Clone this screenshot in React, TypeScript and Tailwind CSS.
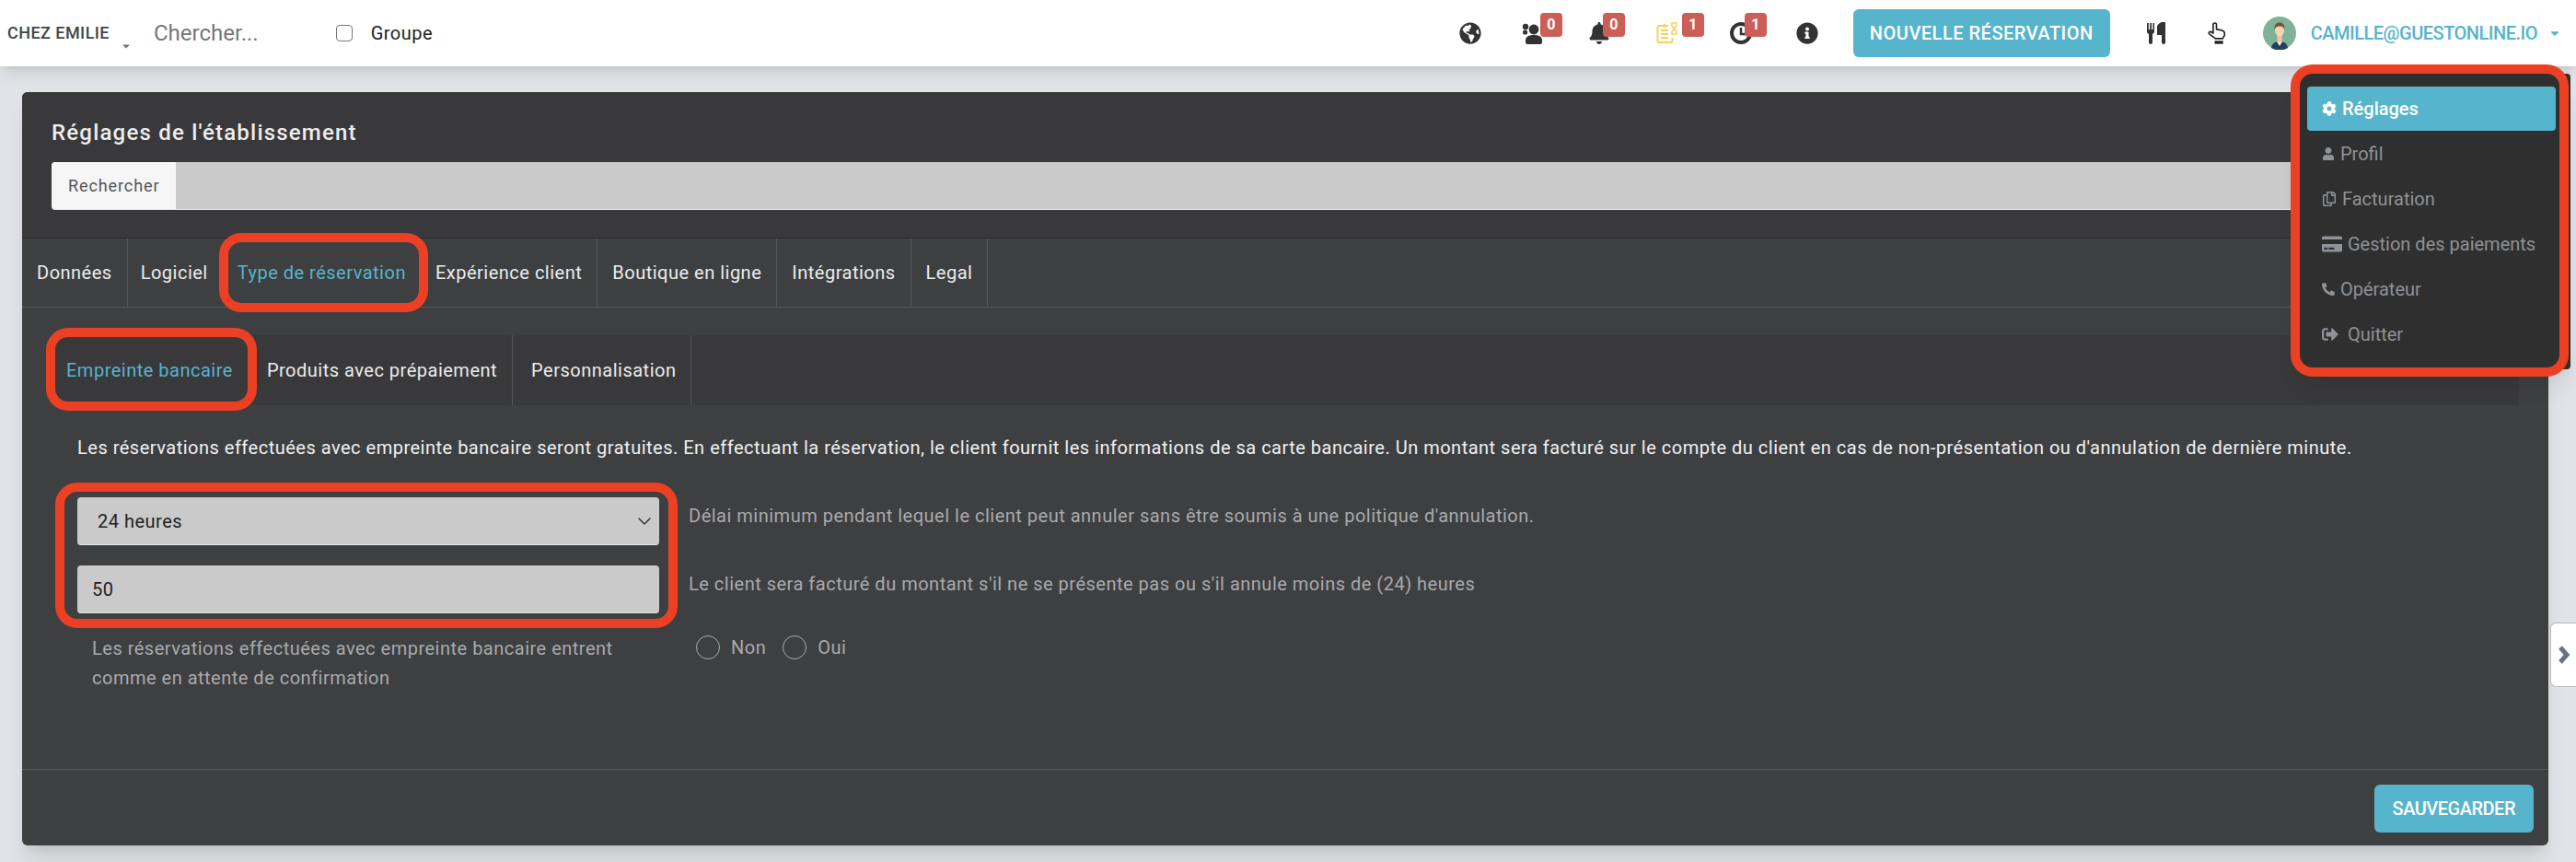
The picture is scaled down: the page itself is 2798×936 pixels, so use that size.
import React from 'react';
import { FaGlobeAmericas, FaBell, FaInfoCircle, FaCog, FaUser, FaRegCopy, FaCreditCard, FaPhoneAlt, FaSignOutAlt, FaCaretDown } from 'react-icons/fa';
import { ChevronDown } from 'lucide-react';

const RedBox: React.FC<{ className: string }> = ({ className }) => (
  <span className={`absolute border-10 border-[#eb4024] rounded-3xl pointer-events-none ${className}`} />
);

const Badge: React.FC<{ value: number; className: string }> = ({ value, className }) => (
  <span className={`absolute -top-2.5 w-6 h-6.5 rounded-sm bg-[#cb5f58] text-white text-base font-bold flex items-center justify-center ${className}`}>{value}</span>
);

const GroupIcon = () => (
  <svg viewBox="0 0 24 24" className="w-6 h-6 text-[#333333]" fill="currentColor">
    <circle cx="4" cy="5" r="3.2" />
    <circle cx="3.6" cy="11" r="2.6" />
    <circle cx="13" cy="8" r="5.4" />
    <path d="M4 20c0-4 3-6 9-6s9 2 9 6v2c0 1-1 2-2 2H6c-1 0-2-1-2-2z" />
  </svg>
);

const TasksIcon = () => (
  <svg viewBox="0 0 24 24" className="w-6 h-6 text-[#f7d35c]" fill="none" stroke="currentColor" strokeWidth="2">
    <path d="M13 4H3a1.500 1.500 0 0 0-1.500 1.500v15A1.500 1.500 0 0 0 3 22h13a1.500 1.500 0 0 0 1.500-1.500V17" />
    <path d="M5 9h8M5 13h8M5 17h8" />
    <path d="M9 2v4" />
    <path d="M17 1h5v3l-2.500 3L22 10v3h-5v-3l2.500-3L17 4z" strokeWidth="1.600" />
  </svg>
);

const ClockIcon = () => (
  <svg viewBox="0 0 24 24" className="w-6 h-6 text-[#333333]" fill="none" stroke="currentColor">
    <circle cx="12" cy="12" r="10" strokeWidth="4" />
    <path d="M12 6v7h5" strokeWidth="2.500" />
  </svg>
);

const CutleryIcon = () => (
  <svg viewBox="0 0 20 24" className="w-5 h-6 text-[#333333]" fill="currentColor">
    <path d="M0 1h1.800v7h1.400V1H5v7h1.400V1H8v9c0 1.500-1 2.500-2 3v9c0 1-.7 2-2 2s-2-1-2-2v-9c-1-.5-2-1.500-2-3z" />
    <path d="M11 14V5c0-2 2-4 5-5h4v22c0 1-.8 2-2 2s-2-1-2-2v-8z" />
  </svg>
);

const HandIcon = () => (
  <svg viewBox="0 0 24 30" className="w-5 h-6.5 text-[#222222]" fill="none" stroke="currentColor" strokeWidth="2" strokeLinejoin="round">
    <path d="M7 4a2.200 2.200 0 0 1 4.400 0v6l5.600 1c3 .6 5 2 5 4.500v2L19.500 22H10L2 16c-1.500-1.500.5-3.800 2.800-2.500L7 15z" />
    <rect x="9" y="25" width="11" height="4" fill="currentColor" stroke="none" />
  </svg>
);

const Avatar = () => (
  <svg viewBox="0 0 36 36" className="w-9 h-9 shrink-0">
    <circle cx="18" cy="18" r="18" fill="#7fb29b" />
    <path d="M9 34c1-5 4-7 9-7s8 2 9 7a18 18 0 0 1-18 0z" fill="#24405f" />
    <path d="M15 27l3 5 3-5z" fill="#ffffff" />
    <rect x="15.500" y="20" width="5" height="8" fill="#eec9a3" />
    <ellipse cx="18" cy="15" rx="5" ry="6.500" fill="#f5d6b4" />
    <path d="M12.500 15c-.5-6 2-8.500 5.500-8.500s6 2.500 5.500 8.500c-.5-3-2-4.500-5.500-4.500s-5 1.500-5.500 4.500z" fill="#7a4f38" />
  </svg>
);

const Tab: React.FC<{ label: string; active?: boolean; divider?: boolean; className?: string; children?: React.ReactNode }> = ({ label, active, divider = true, className = 'px-4', children }) => (
  <div className={`relative h-full flex items-center text-xl tracking-wide ${className} ${divider ? 'border-r border-[#55565a]' : ''} ${active ? 'text-[#56b4cc]' : 'text-[#ececec]'}`}>
    {label}
    {children}
  </div>
);

const MenuItem: React.FC<{ icon: React.ReactNode; label: string; active?: boolean; gap?: string }> = ({ icon, label, active, gap = 'gap-1.5' }) => (
  <div className={`h-12 flex items-center px-4 rounded-sm text-xl ${gap} ${active ? 'bg-[#56b4cc] text-white font-medium' : 'text-[#8f9296]'}`}>
    {icon}
    <span>{label}</span>
  </div>
);

export default function App() {
  return (
    <div className="relative h-screen overflow-hidden flex flex-col bg-[#e1e3e8] font-[Roboto,sans-serif]">
      <header className="h-18 shrink-0 flex items-center bg-white shadow-lg z-10 pl-2 pr-4">
        <span className="text-lg font-medium uppercase tracking-wide text-[#444444]">Chez Emilie</span>
        <FaCaretDown className="w-3 h-3 ml-3 mt-7 text-[#777777]" />
        <span className="ml-6 text-2xl text-[#777777]">Chercher...</span>
        <input type="checkbox" readOnly className="ml-21 w-4.5 h-4.5 appearance-none rounded-sm border border-[#777777]" />
        <span className="ml-5 text-xl tracking-wide text-[#222222]">Groupe</span>

        <div className="ml-auto flex items-center">
          <FaGlobeAmericas className="w-6 h-6 text-[#333333]" />
          <div className="relative ml-11 w-6 h-6"><GroupIcon /><Badge value={0} className="left-5" /></div>
          <div className="relative ml-12 w-6 h-6"><FaBell className="w-6 h-6 text-[#333333]" /><Badge value={0} className="left-4" /></div>
          <div className="relative ml-12.5 w-6 h-6"><TasksIcon /><Badge value={1} className="left-7" /></div>
          <div className="relative ml-14 w-6 h-6"><ClockIcon /><Badge value={1} className="left-4" /></div>
          <FaInfoCircle className="ml-12 w-6 h-6 text-[#333333]" />
          <button className="ml-9.5 h-13 px-4.5 rounded-md bg-[#56b4cc] text-white text-xl font-medium uppercase tracking-wide">Nouvelle réservation</button>
          <div className="ml-10"><CutleryIcon /></div>
          <div className="ml-11.5"><HandIcon /></div>
          <div className="ml-10"><Avatar /></div>
          <span className="ml-4 text-xl font-medium uppercase tracking-tight text-[#56b4cc]">Camille@guestonline.io</span>
          <FaCaretDown className="ml-3 w-3.5 h-3.5 text-[#56b4cc]" />
        </div>
      </header>

      <main className="flex-1 min-h-0 flex flex-col ml-6 mr-7.5 mt-7 mb-4.5 rounded-md bg-[#3e3f41] shadow-xl">
        <div className="bg-[#39393b] rounded-t-md pt-7 pb-7.5 px-8">
          <h1 className="text-2xl font-medium tracking-wider text-[#ededed] leading-8">Réglages de l'établissement</h1>
          <div className="mt-4 h-13 flex rounded-sm bg-[#cacaca] border-b border-[#e6e6e6]">
            <div className="flex items-center px-4.5 bg-[#f6f6f6] rounded-l-sm text-lg tracking-wider text-[#555555]">Rechercher</div>
          </div>
        </div>

        <nav className="h-19 shrink-0 flex border-t border-b border-t-[#2c2d2f] border-b-[#55565a]">
          <Tab label="Données" />
          <Tab label="Logiciel" divider={false} className="pl-3.5 pr-4" />
          <Tab label="Type de réservation" active divider={false}>
            <RedBox className="-left-1 -right-2 -top-1.5 -bottom-1.5" />
          </Tab>
          <Tab label="Expérience client" />
          <Tab label="Boutique en ligne" />
          <Tab label="Intégrations" />
          <Tab label="Legal" />
        </nav>

        <div className="mt-7.5 mx-8 h-19 shrink-0 flex bg-[#39393b]">
          <Tab label="Empreinte bancaire" active className="px-4">
            <RedBox className="-left-1.5 -right-2.5 -top-2 -bottom-1.5" />
          </Tab>
          <Tab label="Produits avec prépaiement" className="pl-5 pr-4" />
          <Tab label="Personnalisation" className="pl-5 pr-4" />
        </div>

        <div className="flex-1 px-15">
          <p className="mt-8 text-xl tracking-wide text-[#f0f0f0] leading-7">
            Les réservations effectuées avec empreinte bancaire seront gratuites. En effectuant la réservation, le client fournit les informations de sa carte bancaire. Un montant sera facturé sur le compte du client en cas de non-présentation ou d'annulation de dernière minute.
          </p>

          <div className="mt-10 flex">
            <div className="relative w-158 flex flex-col gap-5.5">
              <div className="relative h-13 flex items-center px-5.5 rounded-sm bg-[#cacaca] border-b border-[#e6e6e6] text-xl tracking-wide text-[#222222]">
                24 heures
                <ChevronDown className="absolute right-1 w-6 h-6 text-[#333333]" strokeWidth={1.5} />
              </div>
              <div className="h-13 flex items-center px-4 rounded-sm bg-[#cacaca] border-b border-[#e6e6e6] text-xl tracking-wide text-[#222222]">50</div>
              <RedBox className="-left-6 -right-5 -top-4 -bottom-4" />
            </div>
            <div className="ml-8 flex flex-col gap-5.5 text-xl tracking-wide text-[#a9aaac]">
              <div className="h-13 pt-1.5">Délai minimum pendant lequel le client peut annuler sans être soumis à une politique d'annulation.</div>
              <div className="h-13 pt-1.5">Le client sera facturé du montant s'il ne se présente pas ou s'il annule moins de (24) heures</div>
            </div>
          </div>

          <div className="mt-5.5 flex">
            <div className="w-158 pl-4 text-xl tracking-wide leading-8 text-[#a9aaac]">
              Les réservations effectuées avec empreinte bancaire entrent<br />comme en attente de confirmation
            </div>
            <div className="ml-10 mt-0.5 flex items-center h-6.5 text-xl tracking-wide text-[#a9aaac]">
              <input type="radio" readOnly className="w-6.5 h-6.5 appearance-none rounded-full border border-[#a9aaac]" />
              <span className="ml-3">Non</span>
              <input type="radio" readOnly className="ml-4.5 w-6.5 h-6.5 appearance-none rounded-full border border-[#a9aaac]" />
              <span className="ml-3">Oui</span>
            </div>
          </div>
        </div>

        <footer className="flex justify-end border-t border-[#55565a] px-4 pt-4 pb-3.5">
          <button className="h-13 px-5 rounded-md bg-[#56b4cc] text-white text-xl font-medium uppercase tracking-tight">Sauvegarder</button>
        </footer>
      </main>

      {/* menu utilisateur ouvert */}
      <div className="absolute top-20 right-1.5 z-20 w-74 pt-3.5 pb-3.5 pl-2.5 pr-4 flex flex-col gap-px rounded-sm bg-[#2f2f2f] shadow-xl">
        <MenuItem active icon={<FaCog className="w-4 h-4" />} label="Réglages" />
        <MenuItem icon={<FaUser className="w-3.5 h-3.5" />} label="Profil" />
        <MenuItem icon={<FaRegCopy className="w-4 h-4" />} label="Facturation" />
        <MenuItem icon={<FaCreditCard className="w-5.5 h-5.5" />} label="Gestion des paiements" />
        <MenuItem icon={<FaPhoneAlt className="w-3.5 h-3.5" />} label="Opérateur" />
        <MenuItem icon={<FaSignOutAlt className="w-4.5 h-4.5" />} label="Quitter" gap="gap-2.5" />
        <RedBox className="-left-2 right-0.5 -top-2.5 -bottom-2" />
      </div>

      <div className="absolute right-0 top-169 w-7 h-17.5 flex items-center justify-center bg-white rounded-l-md border border-r-0 border-[#bbbbbb]">
        <svg viewBox="0 0 14 20" className="w-3.5 h-5 text-[#6b7080]" fill="none" stroke="currentColor" strokeWidth="5">
          <path d="M3 2l7 8-7 8" />
        </svg>
      </div>
    </div>
  );
}
